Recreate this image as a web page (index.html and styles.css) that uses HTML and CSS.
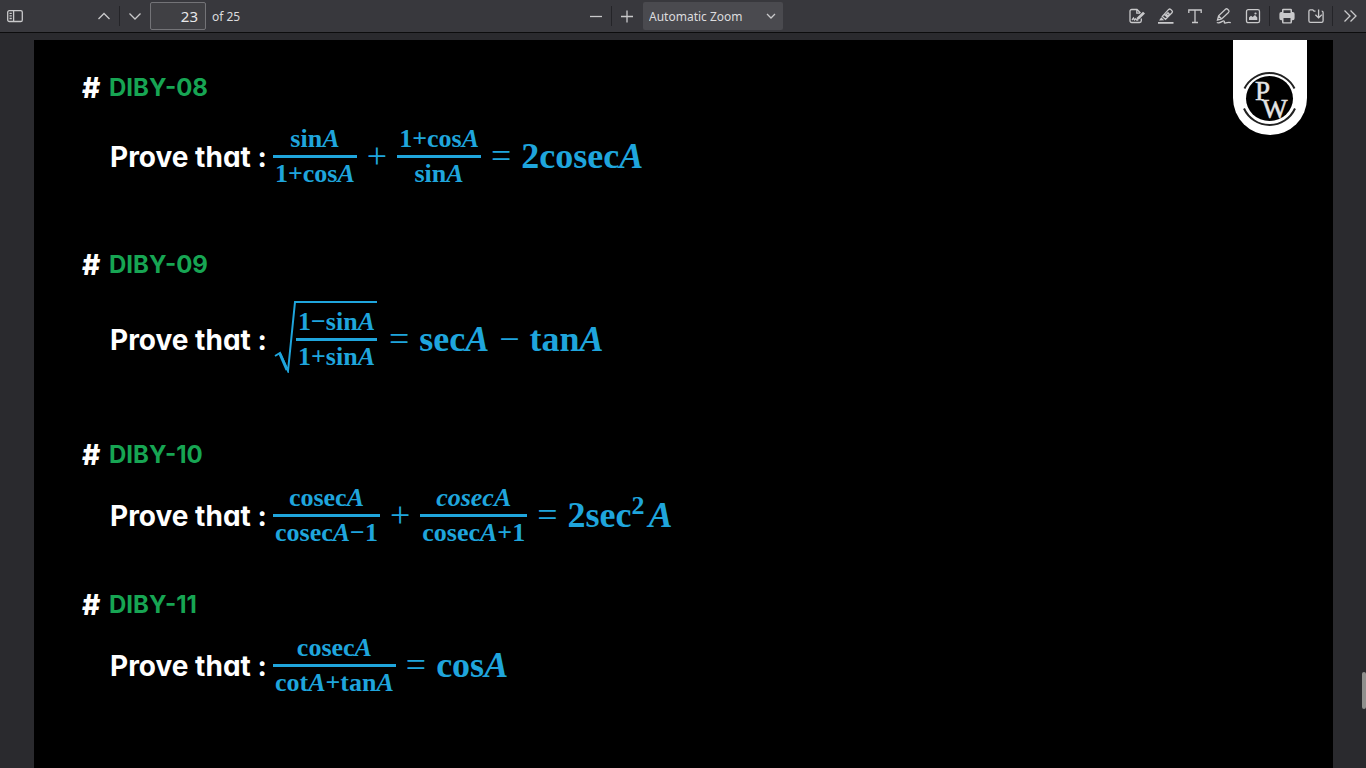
FILE: index.html
```html
<!DOCTYPE html>
<html lang="en">
<head>
<meta charset="utf-8">
<meta name="viewport" content="width=device-width, initial-scale=1">
<title>PDF viewer</title>
<link rel="stylesheet" href="styles.css">
</head>
<body>
<header class="toolbar">
  <div class="group">
    <button class="tool tool-sidebar" aria-label="Toggle sidebar"><svg viewBox="0 0 16 16"><rect x="0.7" y="2.7" width="14.6" height="10.8" rx="1.6"/><path d="M6.6 2.7v10.8M2.5 5.3h2.3M2.5 7.9h2.3M2.5 10.5h2.3"/></svg></button>
    <button class="tool" aria-label="Previous page"><svg viewBox="0 0 16 16"><path d="M2.5 11 8 5.5 13.5 11"/></svg></button>
    <span class="divider"></span>
    <button class="tool" aria-label="Next page"><svg viewBox="0 0 16 16"><path d="M2.5 5.5 8 11l5.500-5.500"/></svg></button>
    <input class="page-number" id="page" type="text" value="23" aria-label="Page">
    <label class="page-count" for="page">of 25</label>
  </div>
  <div class="group">
    <button class="tool" aria-label="Zoom out"><svg viewBox="0 0 16 16"><path d="M2 8.500h12"/></svg></button>
    <span class="divider"></span>
    <button class="tool" aria-label="Zoom in"><svg viewBox="0 0 16 16"><path d="M2 8.500h12M8 2.500v12"/></svg></button>
    <div class="zoom">
      <select aria-label="Zoom"><option>Automatic Zoom</option></select>
      <svg class="zoom-arrow" viewBox="0 0 10 10"><path d="M1 3l4 4 4-4"/></svg>
    </div>
  </div>
  <div class="group group-end">
    <button class="tool" aria-label="Sign"><svg viewBox="0 0 16 16"><path d="M12.300 10.500v2.300a1.700 1.700 0 0 1-1.700 1.700H2.700A1.700 1.700 0 0 1 1 12.800V3.200a1.700 1.700 0 0 1 1.700-1.700H8l3.500 3.500M7.800 1.700v3.500h3.400"/><path class="solid" d="M8.300 9.300 14 3.700l2 1.900-5.800 5.600-2.400.5z"/><path d="M3 12l1.500-2 1 2 1.300-1.300.9 1.300h1.600"/></svg></button>
    <button class="tool" aria-label="Highlight"><svg viewBox="0 0 16 16"><path class="solid" d="M0 14h15.500v1.800H0zM1 12.500l2.300-3.200 2.800 2.900z"/><path d="M4.300 8.400 10.700 1.400q1-.9 2 0l1.300 1.300q1 1 0 2L7.500 11.300zM6.400 6.300l3 3M8.300 6.500l1.500 1.500 1.600-1.700-1.400-1.500z"/></svg></button>
    <button class="tool" aria-label="Text"><svg viewBox="0 0 16 16"><path d="M1.800 5V2h12.400v3M8 2v12.500M5 14.500h6"/></svg></button>
    <button class="tool" aria-label="Draw"><svg viewBox="0 0 16 16"><path d="M1.500 12l1.100-4.200L9.500 1.200q1.100-.9 2.100.1l1 1q1 1.100-.1 2.100L5.600 10.900zM2.600 7.900l2.900 2.900M.8 14.500c3.700 1.500 5.700-2.400 7.200-1.500 1.200.7-.7 2.400 1.200 2 1.900-.5 3.200-1 5.600-.3"/></svg></button>
    <button class="tool" aria-label="Add image"><svg viewBox="0 0 16 16"><rect x="1.500" y="1.700" width="13" height="13" rx="1.700"/><path class="solid" d="M4 12V9.500l2-1.800 1.700 1.400L10 7l2.300 2.500V12z"/><circle class="solid" cx="10.500" cy="5.500" r="1.100"/></svg></button>
    <span class="divider"></span>
    <button class="tool" aria-label="Print"><svg viewBox="0 0 16 16"><path class="solid" fill-rule="evenodd" d="M3 4V2Q3 .8 4.300.8h7.400Q13 .8 13 2v2h.7A1.900 1.900 0 0 1 15.600 6v4.300a1.900 1.900 0 0 1-1.900 1.900H13V14q0 1.500-1.300 1.500H4.300Q3 15.500 3 14v-1.800h-.7A1.900 1.900 0 0 1 .4 10.300V6A1.900 1.900 0 0 1 2.300 4zM4.500 2.200V5h7V2.200zM4.500 10v4.200h7V10z"/></svg></button>
    <button class="tool" aria-label="Save"><svg viewBox="0 0 16 16"><path d="M7.500 3.200H6L4.800 1.800H2.300A1.400 1.400 0 0 0 .9 3.200v9.600a1.600 1.600 0 0 0 1.600 1.600h11a1.600 1.600 0 0 0 1.600-1.600V4.600q0-1.400-1.400-1.400M10.600 1.500v8M7.400 6.800l3.200 3.100 3.200-3.100"/></svg></button>
    <span class="divider"></span>
    <button class="tool" aria-label="Tools"><svg viewBox="0 0 16 16"><path d="M2.500 2.500 8 8l-5.500 5.500M8.500 2.500 14 8l-5.500 5.500"/></svg></button>
  </div>
</header>

<main class="viewer">
  <article class="sheet">
    <svg class="brand" viewBox="0 0 74 95" role="img" aria-label="PW">
      <path fill="#fff" d="M0 0h74v58a37 37 0 0 1-74 0z"/>
      <ellipse cx="36.500" cy="58.500" rx="23.500" ry="22.500"/>
      <path class="brand-arc" d="M11.500 48.500a28 28 0 0 1 50 0M11 68.500a28 28 0 0 0 51 0"/>
      <text class="brand-letter" x="22" y="60">P</text>
      <text class="brand-letter" x="29" y="78">W</text>
    </svg>

    <section class="problem problem-first">
      <h2><span class="hash">#</span>DIBY-08</h2>
      <div class="statement">
        <span class="lead">Prove that :</span>
        <div class="equation">
          <span class="frac"><span>sin<i>A</i></span><span>1+cos<i>A</i></span></span>
          <span class="op">+</span>
          <span class="frac"><span>1+cos<i>A</i></span><span>sin<i>A</i></span></span>
          <span class="op">=</span>
          <span>2cosec<i>A</i></span>
        </div>
      </div>
    </section>

    <section class="problem problem-root">
      <h2><span class="hash">#</span>DIBY-09</h2>
      <div class="statement">
        <span class="lead">Prove that :</span>
        <div class="equation">
          <span class="root">
            <svg viewBox="0 0 22 72"><path d="M1 55l5-3 8 18L21 1h1"/><path class="root-thick" d="M6 53l7 16"/></svg>
            <span class="radicand"><span class="frac"><span>1−sin<i>A</i></span><span>1+sin<i>A</i></span></span></span>
          </span>
          <span class="op">=</span>
          <span>sec<i>A</i></span>
          <span class="op">−</span>
          <span>tan<i>A</i></span>
        </div>
      </div>
    </section>

    <section class="problem problem-tight">
      <h2><span class="hash">#</span>DIBY-10</h2>
      <div class="statement">
        <span class="lead">Prove that :</span>
        <div class="equation">
          <span class="frac"><span>cosec<i>A</i></span><span>cosec<i>A</i>−1</span></span>
          <span class="op">+</span>
          <span class="frac"><span><i>cosecA</i></span><span>cosec<i>A</i>+1</span></span>
          <span class="op">=</span>
          <span>2sec<sup>2</sup><i>A</i></span>
        </div>
      </div>
    </section>

    <section class="problem problem-tight">
      <h2><span class="hash">#</span>DIBY-11</h2>
      <div class="statement">
        <span class="lead">Prove that :</span>
        <div class="equation">
          <span class="frac"><span>cosec<i>A</i></span><span>cot<i>A</i>+tan<i>A</i></span></span>
          <span class="op">=</span>
          <span>cos<i>A</i></span>
        </div>
      </div>
    </section>
  </article>
  <div class="scroll-thumb"></div>
</main>
</body>
</html>
```

FILE: styles.css
```css
* { box-sizing: border-box; }

body {
  margin: 0;
  height: 100vh;
  display: flex;
  flex-direction: column;
  overflow: hidden;
  background: #2a2a2e;
  font-family: "Noto Sans", sans-serif;
}

.toolbar {
  flex: none;
  display: grid;
  grid-template-columns: 1fr auto 1fr;
  align-items: center;
  height: 33px;
  padding: 0 2px 0 1px;
  background: #38383d;
  border-bottom: 1px solid #0c0c0d;
  color: #dcdcde;
}

.group { display: flex; align-items: center; gap: 1px; }
.group-end { justify-content: flex-end; }

.tool {
  width: 28px;
  height: 28px;
  padding: 6px;
  border: 0;
  background: none;
}
.tool-sidebar { margin-right: 60px; }
.tool svg { display: block; width: 16px; height: 16px; overflow: visible; }
.tool path, .tool rect, .zoom-arrow path {
  fill: none;
  stroke: #c9c9cb;
  stroke-width: 1.3;
}
.tool .solid { fill: #c9c9cb; stroke: none; }

.divider { width: 1px; height: 20px; background: #242428; }
.group-end .divider { margin: 0 2px 0 1px; }

.page-number {
  width: 56px;
  height: 28px;
  padding: 0 7px;
  border: 1px solid #737377;
  border-radius: 2px;
  background: #404044;
  color: #e8e8ea;
  font: 15px "Noto Sans", sans-serif;
  text-align: right;
}
.page-count { margin-left: 5px; font-size: 12px; }

.zoom { position: relative; margin-left: 1px; }
.zoom select {
  display: block;
  appearance: none;
  width: 140px;
  height: 28px;
  padding: 0 24px 0 6px;
  border: 0;
  border-radius: 2px;
  background: #4a4a4f;
  color: #dcdcde;
  font: 12px "Noto Sans", sans-serif;
}
.zoom-arrow {
  position: absolute;
  top: 9px;
  right: 7px;
  width: 10px;
  height: 10px;
  pointer-events: none;
}

.viewer { position: relative; flex: 1; min-height: 0; padding: 7px 33px 0 34px; }

.sheet {
  position: relative;
  height: 100%;
  padding: 32px 48px 0;
  background: #000;
}

.brand { position: absolute; top: 0; right: 26px; width: 74px; height: 95px; }
.brand-arc { fill: none; stroke: #222; stroke-width: 2; }
.brand-letter { fill: #e4e4e4; font: 27px "Liberation Serif", serif; stroke: #e4e4e4; stroke-width: 0.5; }

.problem h2 {
  display: flex;
  margin: 0;
  color: #17a553;
  font: 700 24px/32px Inter, sans-serif;
}
.hash { flex: 0 0 27px; color: #fff; font-size: 28px; font-weight: 800; }
.problem-first { margin-bottom: 53px; }
.problem-first h2 { margin-bottom: 12px; }
.problem-root { margin-bottom: 60px; }
.problem-root h2 { margin-bottom: 18px; }
.problem-tight { margin-bottom: 34px; }
.problem-tight h2 { margin-bottom: 4px; }

.statement { display: flex; align-items: center; height: 80px; padding-left: 28px; }
.lead {
  flex: 0 0 163px;
  padding-top: 2px;
  color: #fff;
  font: 700 28px/40px Inter, sans-serif;
  font-feature-settings: "cv11";
  white-space: nowrap;
}

.equation {
  display: flex;
  align-items: center;
  gap: 10px;
  color: #1fa5dc;
  font: 700 36px/40px "Liberation Serif", serif;
  white-space: nowrap;
}
.op { font-weight: 400; }
.equation sup { font-size: 26px; line-height: 0; margin-right: 4px; }

.frac {
  display: flex;
  flex-direction: column;
  font-size: 26px;
  line-height: 32px;
  text-align: center;
}
.frac > span { padding: 0 2px; }
.frac > span:first-child { border-bottom: 3px solid #1fa5dc; }

.root { display: flex; padding-bottom: 5px; margin: 0 2px 0 1px; }
.root svg { width: 22px; height: 72px; }
.root path { fill: none; stroke: #1fa5dc; stroke-width: 2; }
.root .root-thick { stroke-width: 3; }
.radicand { padding-top: 3px; border-top: 2px solid #1fa5dc; }

.scroll-thumb {
  position: absolute;
  right: 0;
  top: 639px;
  width: 4px;
  height: 37px;
  border-radius: 2px;
  background: #8f8f8d;
}
```
